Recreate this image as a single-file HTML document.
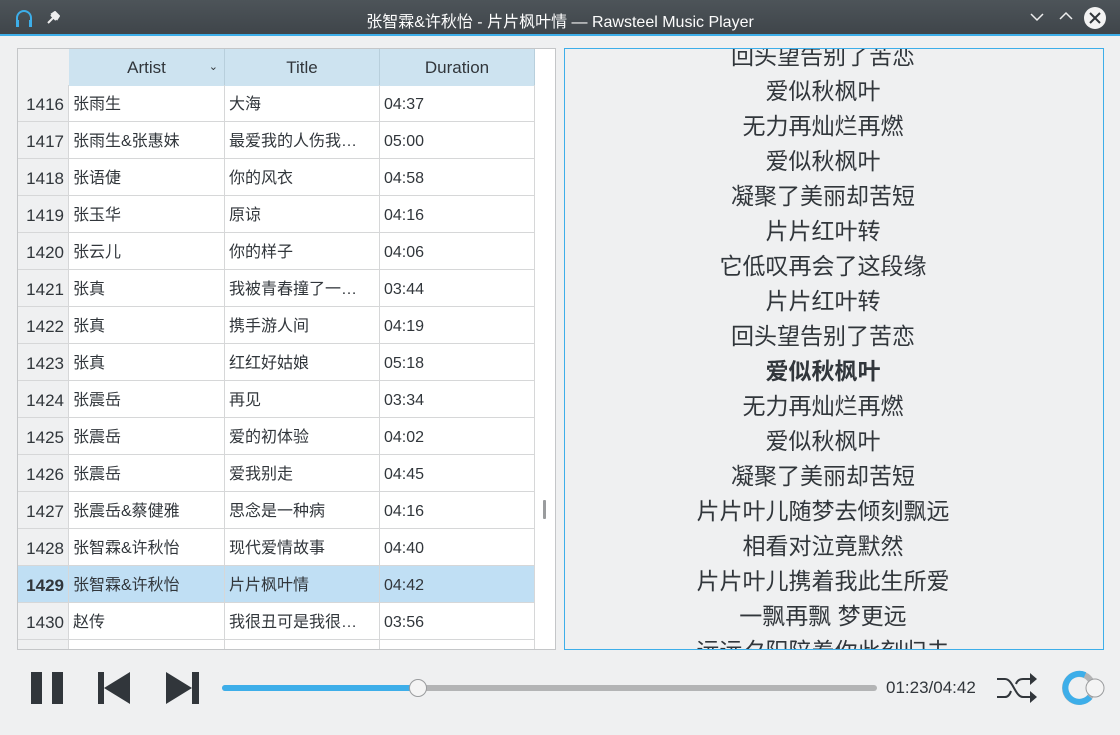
<!DOCTYPE html>
<html><head><meta charset="utf-8"><style>
*{margin:0;padding:0;box-sizing:border-box}
body{width:1120px;height:735px;background:#eff0f1;font-family:"Liberation Sans","Noto Sans CJK SC",sans-serif;color:#31363b;position:relative;overflow:hidden}
.tb{position:absolute;left:0;top:0;width:1120px;height:36px;background:linear-gradient(#4d5459,#3f454a);border-bottom:2px solid #3daee9}
.tt{position:absolute;left:0;width:1120px;top:8px;text-align:center;color:#fcfcfc;font-size:16px}
.tbl{position:absolute;left:17px;top:48px;width:539px;height:602px;border:1px solid #c4c6c8;background:#fff;overflow:hidden}
.row{position:absolute;left:0;height:37px;width:518px;font-size:16px}
.c{position:absolute;top:0;height:37px;line-height:39px;border-right:1px solid #d6d7d8;border-bottom:1px solid #d6d7d8;padding-left:4px;white-space:nowrap}
.n{left:0;width:51px;background:#eff0f1;text-align:right;padding-right:4px;color:#31363b;font-size:17px}
.a{left:51px;width:156px}.t{left:207px;width:155px}.d{left:362px;width:155px}
.hd .c{background:#cde3f0;text-align:center;padding:0;border-right:1px solid #b8cfdc;border-bottom:none;font-size:17px;line-height:37px}
.sel .c{background:#c0dff4}
.ly{position:absolute;left:564px;top:48px;width:540px;height:602px;border:1px solid #3daee9;overflow:hidden}
.ly div{position:absolute;left:-11px;width:538px;text-align:center;font-size:23px;line-height:30px;color:#31363b}
</style></head><body>
<div class="tb">
<svg style="position:absolute;left:14px;top:8px" width="20" height="20"><path d="M3 17V10a7 7 0 0 1 14 0v7" fill="none" stroke="#3daee9" stroke-width="2"/><rect x="2" y="12" width="3" height="7" fill="#3daee9"/><rect x="15" y="12" width="3" height="7" fill="#3daee9"/></svg>
<svg style="position:absolute;left:46px;top:11px" width="14" height="14"><path d="M2 12L7 7M5 4l5 5M6 3l5 5 2-3-4-4z" stroke="#eee" stroke-width="2" fill="#eee"/></svg>
<div class="tt">张智霖&amp;许秋怡 - 片片枫叶情 — Rawsteel Music Player</div>
<svg style="position:absolute;left:1030px;top:12px" width="14" height="10"><path d="M1 2l6 6 6-6" stroke="#eee" stroke-width="1.5" fill="none"/></svg>
<svg style="position:absolute;left:1059px;top:11px" width="14" height="10"><path d="M1 8l6-6 6 6" stroke="#eee" stroke-width="1.5" fill="none"/></svg>
<svg style="position:absolute;left:1084px;top:7px" width="22" height="22"><circle cx="11" cy="11" r="11" fill="#f3f3f3"/><path d="M6 6l10 10M16 6L6 16" stroke="#31363b" stroke-width="2"/></svg>
</div>
<div class="tbl">
<div class="row hd" style="top:0;height:36px"><div class="c n" style="background:#eff0f1;border:none"></div><div class="c a">Artist<span style="position:absolute;right:6px;top:0;font-size:11px">⌄</span></div><div class="c t">Title</div><div class="c d">Duration</div></div>
<div class="row" style="top:36px"><div class="c n">1416</div><div class="c a">张雨生</div><div class="c t">大海</div><div class="c d">04:37</div></div>
<div class="row" style="top:73px"><div class="c n">1417</div><div class="c a">张雨生&amp;张惠妹</div><div class="c t">最爱我的人伤我…</div><div class="c d">05:00</div></div>
<div class="row" style="top:110px"><div class="c n">1418</div><div class="c a">张语倢</div><div class="c t">你的风衣</div><div class="c d">04:58</div></div>
<div class="row" style="top:147px"><div class="c n">1419</div><div class="c a">张玉华</div><div class="c t">原谅</div><div class="c d">04:16</div></div>
<div class="row" style="top:184px"><div class="c n">1420</div><div class="c a">张云儿</div><div class="c t">你的样子</div><div class="c d">04:06</div></div>
<div class="row" style="top:221px"><div class="c n">1421</div><div class="c a">张真</div><div class="c t">我被青春撞了一…</div><div class="c d">03:44</div></div>
<div class="row" style="top:258px"><div class="c n">1422</div><div class="c a">张真</div><div class="c t">携手游人间</div><div class="c d">04:19</div></div>
<div class="row" style="top:295px"><div class="c n">1423</div><div class="c a">张真</div><div class="c t">红红好姑娘</div><div class="c d">05:18</div></div>
<div class="row" style="top:332px"><div class="c n">1424</div><div class="c a">张震岳</div><div class="c t">再见</div><div class="c d">03:34</div></div>
<div class="row" style="top:369px"><div class="c n">1425</div><div class="c a">张震岳</div><div class="c t">爱的初体验</div><div class="c d">04:02</div></div>
<div class="row" style="top:406px"><div class="c n">1426</div><div class="c a">张震岳</div><div class="c t">爱我别走</div><div class="c d">04:45</div></div>
<div class="row" style="top:443px"><div class="c n">1427</div><div class="c a">张震岳&amp;蔡健雅</div><div class="c t">思念是一种病</div><div class="c d">04:16</div></div>
<div class="row" style="top:480px"><div class="c n">1428</div><div class="c a">张智霖&amp;许秋怡</div><div class="c t">现代爱情故事</div><div class="c d">04:40</div></div>
<div class="row sel" style="top:517px"><div class="c n" style="background:#c0dff4;font-weight:bold">1429</div><div class="c a">张智霖&amp;许秋怡</div><div class="c t">片片枫叶情</div><div class="c d">04:42</div></div>
<div class="row" style="top:554px"><div class="c n">1430</div><div class="c a">赵传</div><div class="c t">我很丑可是我很…</div><div class="c d">03:56</div></div>
<div class="row" style="top:591px"><div class="c n"></div><div class="c a"></div><div class="c t"></div><div class="c d"></div></div>
<div style="position:absolute;left:525px;top:451px;width:3px;height:19px;background:#9a9c9e;border-radius:1px"></div>
</div>
<div class="ly">
<div style="top:-8px">回头望告别了苦恋</div>
<div style="top:27px">爱似秋枫叶</div>
<div style="top:62px">无力再灿烂再燃</div>
<div style="top:97px">爱似秋枫叶</div>
<div style="top:132px">凝聚了美丽却苦短</div>
<div style="top:167px">片片红叶转</div>
<div style="top:202px">它低叹再会了这段缘</div>
<div style="top:237px">片片红叶转</div>
<div style="top:272px">回头望告别了苦恋</div>
<div style="top:307px;font-weight:bold">爱似秋枫叶</div>
<div style="top:342px">无力再灿烂再燃</div>
<div style="top:377px">爱似秋枫叶</div>
<div style="top:412px">凝聚了美丽却苦短</div>
<div style="top:447px">片片叶儿随梦去倾刻飘远</div>
<div style="top:482px">相看对泣竟默然</div>
<div style="top:517px">片片叶儿携着我此生所爱</div>
<div style="top:552px">一飘再飘 梦更远</div>
<div style="top:587px">远远夕阳陪着你此刻归去</div>
</div>
<svg style="position:absolute;left:0;top:660px" width="220" height="60"><rect x="31" y="12" width="11" height="32" fill="#31363b"/><rect x="52" y="12" width="11" height="32" fill="#31363b"/><rect x="98" y="12" width="6" height="32" fill="#31363b"/><path d="M104 28L130 12V44z" fill="#31363b"/><path d="M166 12L192 28L166 44z" fill="#31363b"/><rect x="192" y="12" width="7" height="32" fill="#31363b"/></svg>
<div style="position:absolute;left:222px;top:685px;width:655px;height:6px;border-radius:3px;background:#b3b4b5"></div>
<div style="position:absolute;left:222px;top:685px;width:196px;height:6px;border-radius:3px;background:#3daee9"></div>
<div style="position:absolute;left:409px;top:679px;width:18px;height:18px;border-radius:50%;background:#f4f4f4;border:1px solid #9a9c9e"></div>
<div style="position:absolute;left:886px;top:678px;font-size:17px">01:23/04:42</div>
<svg style="position:absolute;left:996px;top:672px" width="42" height="32"><path d="M1 7h8c8 0 10 18 18 18h8M1 25h8c3 0 5-3 6-6M20 12c1-3 3-5 7-5h8" fill="none" stroke="#31363b" stroke-width="2"/><path d="M34 1l7 6-7 6zM34 19l7 6-7 6z" fill="#31363b"/></svg>
<svg style="position:absolute;left:1060px;top:669px" width="50" height="38"><circle cx="19" cy="19" r="14" fill="none" stroke="#b3b4b5" stroke-width="6"/><path d="M25 6A14 14 0 1 0 30 28" fill="none" stroke="#3daee9" stroke-width="6"/><circle cx="35" cy="19" r="9" fill="#f4f4f4" stroke="#9a9c9e"/></svg>
</body></html>
